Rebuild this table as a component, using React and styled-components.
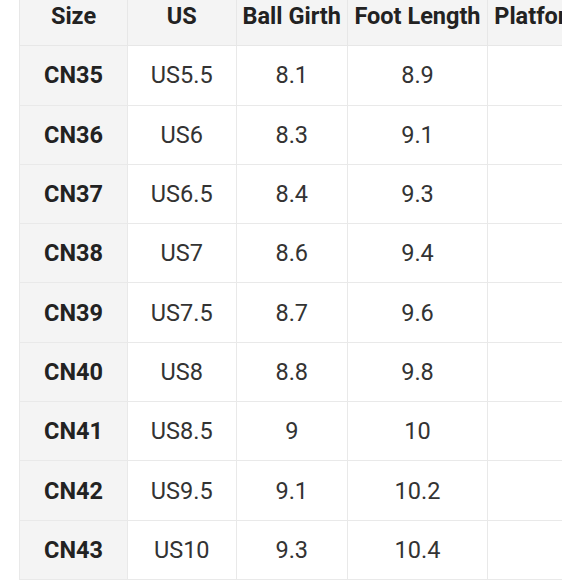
import React from "react";
import styled, { createGlobalStyle } from "styled-components";

const Global = createGlobalStyle`
  html, body { margin: 0; padding: 0; background: #ffffff; }
  body { font-family: Roboto, "Noto Sans", "Liberation Sans", sans-serif; }
`;

const Frame = styled.div`
  width: 580px;
  height: 580px;
  overflow: hidden;
  background: #ffffff;
`;

const Scroller = styled.div`
  margin: -14px 0 0 19px;
  width: 543px;
  overflow: hidden;
`;

const Table = styled.table`
  border-collapse: collapse;
  table-layout: fixed;
  width: 574px;
  color: #2a2a2a;
  font-size: 23.5px;
`;

const HeadCell = styled.th`
  height: 59.3px;
  padding: 0;
  box-sizing: border-box;
  background: #f4f4f4;
  border: 1px solid #e7e7e7;
  font-weight: 700;
  text-align: center;
  white-space: nowrap;
  overflow: hidden;
  color: #222222;
`;

const Cell = styled.td`
  height: 59.3px;
  padding: 0;
  box-sizing: border-box;
  border: 1px solid #e9e9e9;
  text-align: center;
  white-space: nowrap;
  background: ${(p) => (p.$key ? "#f4f4f4" : "#ffffff")};
  font-weight: ${(p) => (p.$key ? 700 : 400)};
  color: ${(p) => (p.$key ? "#222222" : "#333333")};
`;

const columns = [
  { label: "Size", width: 108 },
  { label: "US", width: 108.5 },
  { label: "Ball Girth", width: 111.5 },
  { label: "Foot Length", width: 140 },
  { label: "Platform", width: 106 },
];

const rows = [
  ["CN35", "US5.5", "8.1", "8.9"],
  ["CN36", "US6", "8.3", "9.1"],
  ["CN37", "US6.5", "8.4", "9.3"],
  ["CN38", "US7", "8.6", "9.4"],
  ["CN39", "US7.5", "8.7", "9.6"],
  ["CN40", "US8", "8.8", "9.8"],
  ["CN41", "US8.5", "9", "10"],
  ["CN42", "US9.5", "9.1", "10.2"],
  ["CN43", "US10", "9.3", "10.4"],
];

export default function App() {
  return (
    <Frame>
      <Global />
      <Scroller>
        <Table>
          <colgroup>
            {columns.map((c) => (
              <col key={c.label} style={{ width: c.width }} />
            ))}
          </colgroup>
          <thead>
            <tr>
              {columns.map((c) => (
                <HeadCell key={c.label}>{c.label}</HeadCell>
              ))}
            </tr>
          </thead>
          <tbody>
            {rows.map((r) => (
              <tr key={r[0]}>
                <Cell $key>{r[0]}</Cell>
                <Cell>{r[1]}</Cell>
                <Cell>{r[2]}</Cell>
                <Cell>{r[3]}</Cell>
                <Cell />
              </tr>
            ))}
          </tbody>
        </Table>
      </Scroller>
    </Frame>
  );
}
